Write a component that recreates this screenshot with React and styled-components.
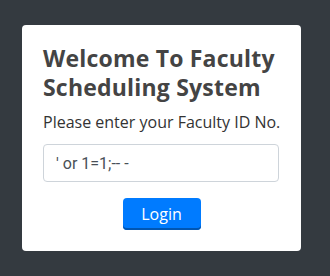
import React from "react";
import styled, { createGlobalStyle } from "styled-components";

const Global = createGlobalStyle`
  html, body {
    margin: 0;
    padding: 0;
    background: #343a40;
  }
  body {
    height: 276px;
    overflow: hidden;
  }
`;

const Page = styled.div`
  padding: 25px 0 0 22px;
`;

const Card = styled.form`
  box-sizing: border-box;
  width: 279px;
  height: 226px;
  background: #fff;
  border-radius: 4px;
  padding: 19px 21px 0 21px;
  display: flex;
  flex-direction: column;
`;

const Title = styled.h2`
  margin: 0;
  font-family: "Open Sans", sans-serif;
  font-weight: 700;
  font-size: 23px;
  line-height: 29px;
  letter-spacing: 0.2px;
  color: #444;
`;

const Prompt = styled.p`
  margin: 8px 0 0;
  font-family: "Open Sans", sans-serif;
  font-size: 16px;
  line-height: 24px;
  color: #333;
  white-space: nowrap;
`;

const Input = styled.input`
  box-sizing: border-box;
  margin-top: 10px;
  width: 236px;
  height: 38px;
  padding: 0 12px;
  border: 1px solid #ced4da;
  border-radius: 4px;
  font-family: "Roboto", sans-serif;
  font-size: 16px;
  color: #495057;
  outline: none;
`;

const Button = styled.button`
  box-sizing: border-box;
  align-self: center;
  margin-top: 16px;
  width: 78px;
  height: 32px;
  border: none;
  border-radius: 4px;
  background: #007bff;
  box-shadow: inset 0 -2px 0 #0056b3;
  color: #fff;
  font-family: "Open Sans", sans-serif;
  font-size: 16px;
  padding: 0;
  cursor: pointer;
`;

const App = () => {
  return (
    <>
      <Global />
      <Page>
        <Card onSubmit={(e) => e.preventDefault()}>
          <Title>Welcome To Faculty Scheduling System</Title>
          <Prompt>Please enter your Faculty ID No.</Prompt>
          <Input type="text" defaultValue="' or 1=1;-- -" />
          <Button type="submit">Login</Button>
        </Card>
      </Page>
    </>
  );
};

export default App;
